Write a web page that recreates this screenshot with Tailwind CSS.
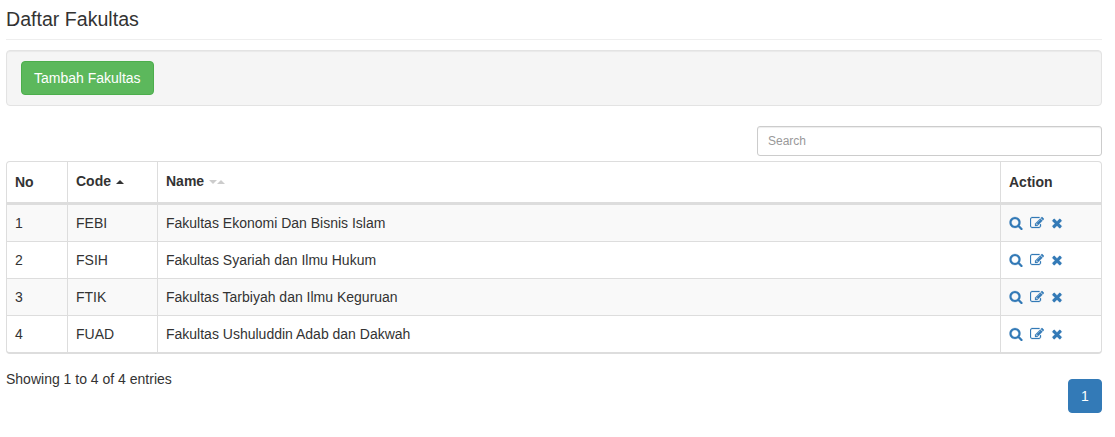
<!DOCTYPE html>
<html lang="en">
<head>
  <meta charset="UTF-8" />
  <title>Daftar Fakultas</title>
  <script src="https://cdn.jsdelivr.net/npm/@tailwindcss/browser@4"></script>
</head>
<body class="bg-white text-[#333] font-['Liberation_Sans',Arial,sans-serif] text-[14px] leading-[20px]">
  <div class="pl-[6px] pr-[13px] w-[1115px] h-[437px] overflow-hidden">

    <!-- Header -->
    <div class="h-[40px] pt-[8px] border-b border-[#eee]">
      <h1 class="text-[19.6px] leading-[22px] font-normal">Daftar Fakultas</h1>
    </div>

    <!-- Toolbar -->
    <div class="mt-[10px] h-[56px] px-[14px] py-[10px] bg-[#f5f5f5] border border-[#e3e3e3] rounded-[4px] shadow-[inset_0_1px_1px_rgba(0,0,0,0.05)]">
      <button class="h-[34px] px-[12px] bg-[#5cb85c] border border-[#4cae4c] rounded-[4px] text-white text-[14px]">Tambah Fakultas</button>
    </div>

    <!-- Search -->
    <div class="mt-[20px] flex justify-end">
      <input type="text" placeholder="Search" class="w-[345px] h-[30px] px-[10px] border border-[#ccc] rounded-[3px] text-[12px] placeholder:text-[#999] shadow-[inset_0_1px_1px_rgba(0,0,0,0.075)]" />
    </div>

    <!-- Table -->
    <div class="mt-[5px] border border-b-2 border-[#ddd] rounded-[4px] overflow-hidden">
      <table class="w-full border-separate border-spacing-0 table-fixed">
        <thead>
          <tr class="font-bold text-left">
            <th class="h-[43px] w-[61px] px-[8px] border-r border-b-[3px] border-[#ddd]">No</th>
            <th class="h-[43px] w-[90px] px-[8px] pb-[2px] border-r border-b-[3px] border-[#ddd]">
              <span class="inline-flex items-center gap-[5px]">Code
                <svg width="8" height="4" viewBox="0 0 8 4" class="mt-[1px]"><path d="M0 4 4 0l4 4z" fill="#333"/></svg>
              </span>
            </th>
            <th class="h-[43px] px-[8px] pb-[2px] border-r border-b-[3px] border-[#ddd]">
              <span class="inline-flex items-center gap-[5px]">Name
                <svg width="16" height="4" viewBox="0 0 16 4" class="mt-[1px]"><path d="M0 0h8L4 4zM8 4l4-4 4 4z" fill="#ccc"/></svg>
              </span>
            </th>
            <th class="h-[43px] w-[100px] px-[8px] border-b-[3px] border-[#ddd]">Action</th>
          </tr>
        </thead>
        <tbody>
          <tr class="bg-[#f9f9f9]">
            <td class="h-[37px] px-[8px] border-r border-b border-[#ddd]">1</td>
            <td class="h-[37px] px-[8px] border-r border-b border-[#ddd]">FEBI</td>
            <td class="h-[37px] px-[8px] border-r border-b border-[#ddd]">Fakultas Ekonomi Dan Bisnis Islam</td>
            <td class="h-[37px] px-[8px] border-b border-[#ddd]">
              <div class="flex items-center text-[#337ab7]">
                <svg viewBox="0 0 1792 1792" class="w-[14px] h-[14px] fill-current stroke-current stroke-[30]"><path d="M1216 832q0-185-131.5-316.5t-316.5-131.5-316.5 131.5-131.5 316.5 131.5 316.5 316.5 131.5 316.5-131.5 131.5-316.5zm512 832q0 52-38 90t-90 38q-54 0-90-38l-343-342q-179 124-399 124-143 0-273.5-55.5t-225-150-150-225-55.5-273.5 55.5-273.5 150-225 225-150 273.5-55.5 273.5 55.5 225 150 150 225 55.5 273.5q0 220-124 399l343 343q37 37 37 90z"/></svg>
                <svg viewBox="0 0 1792 1792" class="ml-[7px] w-[14px] h-[14px] fill-current stroke-current stroke-[30]"><path d="M888 1184l116-116-152-152-116 116v56h96v96h56zm440-720q-16-16-33 1l-350 350q-17 17-1 33t33-1l350-350q17-17 1-33zm80 594v190q0 119-84.5 203.5t-203.5 84.5h-832q-119 0-203.5-84.5t-84.5-203.5v-832q0-119 84.5-203.5t203.5-84.5h832q63 0 117 25 15 7 18 23 3 17-9 29l-49 49q-14 14-32 8-23-6-45-6h-832q-66 0-113 47t-47 113v832q0 66 47 113t113 47h832q66 0 113-47t47-113v-126q0-13 9-22l64-64q15-15 35-7t20 29zm-96-738l288 288-672 672h-288v-288zm444 132l-92 92-288-288 92-92q28-28 68-28t68 28l152 152q28 28 28 68t-28 68z"/></svg>
                <svg viewBox="0 0 1792 1792" class="ml-[6px] w-[14px] h-[14px] fill-current stroke-current stroke-[30]"><path d="M1490 1322q0 40-28 68l-136 136q-28 28-68 28t-68-28l-294-294-294 294q-28 28-68 28t-68-28l-136-136q-28-28-28-68t28-68l294-294-294-294q-28-28-28-68t28-68l136-136q28-28 68-28t68 28l294 294 294-294q28-28 68-28t68 28l136 136q28 28 28 68t-28 68l-294 294 294 294q28 28 28 68z"/></svg>
              </div>
            </td>
          </tr>
          <tr>
            <td class="h-[37px] px-[8px] border-r border-b border-[#ddd]">2</td>
            <td class="h-[37px] px-[8px] border-r border-b border-[#ddd]">FSIH</td>
            <td class="h-[37px] px-[8px] border-r border-b border-[#ddd]">Fakultas Syariah dan Ilmu Hukum</td>
            <td class="h-[37px] px-[8px] border-b border-[#ddd]">
              <div class="flex items-center text-[#337ab7]">
                <svg viewBox="0 0 1792 1792" class="w-[14px] h-[14px] fill-current stroke-current stroke-[30]"><path d="M1216 832q0-185-131.5-316.5t-316.5-131.5-316.5 131.5-131.5 316.5 131.5 316.5 316.5 131.5 316.5-131.5 131.5-316.5zm512 832q0 52-38 90t-90 38q-54 0-90-38l-343-342q-179 124-399 124-143 0-273.5-55.5t-225-150-150-225-55.5-273.5 55.5-273.5 150-225 225-150 273.5-55.5 273.5 55.5 225 150 150 225 55.5 273.5q0 220-124 399l343 343q37 37 37 90z"/></svg>
                <svg viewBox="0 0 1792 1792" class="ml-[7px] w-[14px] h-[14px] fill-current stroke-current stroke-[30]"><path d="M888 1184l116-116-152-152-116 116v56h96v96h56zm440-720q-16-16-33 1l-350 350q-17 17-1 33t33-1l350-350q17-17 1-33zm80 594v190q0 119-84.5 203.5t-203.5 84.5h-832q-119 0-203.5-84.5t-84.5-203.5v-832q0-119 84.5-203.5t203.5-84.5h832q63 0 117 25 15 7 18 23 3 17-9 29l-49 49q-14 14-32 8-23-6-45-6h-832q-66 0-113 47t-47 113v832q0 66 47 113t113 47h832q66 0 113-47t47-113v-126q0-13 9-22l64-64q15-15 35-7t20 29zm-96-738l288 288-672 672h-288v-288zm444 132l-92 92-288-288 92-92q28-28 68-28t68 28l152 152q28 28 28 68t-28 68z"/></svg>
                <svg viewBox="0 0 1792 1792" class="ml-[6px] w-[14px] h-[14px] fill-current stroke-current stroke-[30]"><path d="M1490 1322q0 40-28 68l-136 136q-28 28-68 28t-68-28l-294-294-294 294q-28 28-68 28t-68-28l-136-136q-28-28-28-68t28-68l294-294-294-294q-28-28-28-68t28-68l136-136q28-28 68-28t68 28l294 294 294-294q28-28 68-28t68 28l136 136q28 28 28 68t-28 68l-294 294 294 294q28 28 28 68z"/></svg>
              </div>
            </td>
          </tr>
          <tr class="bg-[#f9f9f9]">
            <td class="h-[37px] px-[8px] border-r border-b border-[#ddd]">3</td>
            <td class="h-[37px] px-[8px] border-r border-b border-[#ddd]">FTIK</td>
            <td class="h-[37px] px-[8px] border-r border-b border-[#ddd]">Fakultas Tarbiyah dan Ilmu Keguruan</td>
            <td class="h-[37px] px-[8px] border-b border-[#ddd]">
              <div class="flex items-center text-[#337ab7]">
                <svg viewBox="0 0 1792 1792" class="w-[14px] h-[14px] fill-current stroke-current stroke-[30]"><path d="M1216 832q0-185-131.5-316.5t-316.5-131.5-316.5 131.5-131.5 316.5 131.5 316.5 316.5 131.5 316.5-131.5 131.5-316.5zm512 832q0 52-38 90t-90 38q-54 0-90-38l-343-342q-179 124-399 124-143 0-273.5-55.5t-225-150-150-225-55.5-273.5 55.5-273.5 150-225 225-150 273.5-55.5 273.5 55.5 225 150 150 225 55.5 273.5q0 220-124 399l343 343q37 37 37 90z"/></svg>
                <svg viewBox="0 0 1792 1792" class="ml-[7px] w-[14px] h-[14px] fill-current stroke-current stroke-[30]"><path d="M888 1184l116-116-152-152-116 116v56h96v96h56zm440-720q-16-16-33 1l-350 350q-17 17-1 33t33-1l350-350q17-17 1-33zm80 594v190q0 119-84.5 203.5t-203.5 84.5h-832q-119 0-203.5-84.5t-84.5-203.5v-832q0-119 84.5-203.5t203.5-84.5h832q63 0 117 25 15 7 18 23 3 17-9 29l-49 49q-14 14-32 8-23-6-45-6h-832q-66 0-113 47t-47 113v832q0 66 47 113t113 47h832q66 0 113-47t47-113v-126q0-13 9-22l64-64q15-15 35-7t20 29zm-96-738l288 288-672 672h-288v-288zm444 132l-92 92-288-288 92-92q28-28 68-28t68 28l152 152q28 28 28 68t-28 68z"/></svg>
                <svg viewBox="0 0 1792 1792" class="ml-[6px] w-[14px] h-[14px] fill-current stroke-current stroke-[30]"><path d="M1490 1322q0 40-28 68l-136 136q-28 28-68 28t-68-28l-294-294-294 294q-28 28-68 28t-68-28l-136-136q-28-28-28-68t28-68l294-294-294-294q-28-28-28-68t28-68l136-136q28-28 68-28t68 28l294 294 294-294q28-28 68-28t68 28l136 136q28 28 28 68t-28 68l-294 294 294 294q28 28 28 68z"/></svg>
              </div>
            </td>
          </tr>
          <tr>
            <td class="h-[36px] px-[8px] border-r border-[#ddd]">4</td>
            <td class="h-[36px] px-[8px] border-r border-[#ddd]">FUAD</td>
            <td class="h-[36px] px-[8px] border-r border-[#ddd]">Fakultas Ushuluddin Adab dan Dakwah</td>
            <td class="h-[36px] px-[8px]">
              <div class="flex items-center text-[#337ab7]">
                <svg viewBox="0 0 1792 1792" class="w-[14px] h-[14px] fill-current stroke-current stroke-[30]"><path d="M1216 832q0-185-131.5-316.5t-316.5-131.5-316.5 131.5-131.5 316.5 131.5 316.5 316.5 131.5 316.5-131.5 131.5-316.5zm512 832q0 52-38 90t-90 38q-54 0-90-38l-343-342q-179 124-399 124-143 0-273.5-55.5t-225-150-150-225-55.5-273.5 55.5-273.5 150-225 225-150 273.5-55.5 273.5 55.5 225 150 150 225 55.5 273.5q0 220-124 399l343 343q37 37 37 90z"/></svg>
                <svg viewBox="0 0 1792 1792" class="ml-[7px] w-[14px] h-[14px] fill-current stroke-current stroke-[30]"><path d="M888 1184l116-116-152-152-116 116v56h96v96h56zm440-720q-16-16-33 1l-350 350q-17 17-1 33t33-1l350-350q17-17 1-33zm80 594v190q0 119-84.5 203.5t-203.5 84.5h-832q-119 0-203.5-84.5t-84.5-203.5v-832q0-119 84.5-203.5t203.5-84.5h832q63 0 117 25 15 7 18 23 3 17-9 29l-49 49q-14 14-32 8-23-6-45-6h-832q-66 0-113 47t-47 113v832q0 66 47 113t113 47h832q66 0 113-47t47-113v-126q0-13 9-22l64-64q15-15 35-7t20 29zm-96-738l288 288-672 672h-288v-288zm444 132l-92 92-288-288 92-92q28-28 68-28t68 28l152 152q28 28 28 68t-28 68z"/></svg>
                <svg viewBox="0 0 1792 1792" class="ml-[6px] w-[14px] h-[14px] fill-current stroke-current stroke-[30]"><path d="M1490 1322q0 40-28 68l-136 136q-28 28-68 28t-68-28l-294-294-294 294q-28 28-68 28t-68-28l-136-136q-28-28-28-68t28-68l294-294-294-294q-28-28-28-68t28-68l136-136q28-28 68-28t68 28l294 294 294-294q28-28 68-28t68 28l136 136q28 28 28 68t-28 68l-294 294 294 294q28 28 28 68z"/></svg>
              </div>
            </td>
          </tr>
        </tbody>
      </table>
    </div>

    <!-- Footer -->
    <div class="mt-[15px] flex justify-between items-start">
      <div>Showing 1 to 4 of 4 entries</div>
      <a class="mt-[10px] w-[34px] h-[34px] flex items-center justify-center bg-[#337ab7] border border-[#337ab7] rounded-[4px] text-white">1</a>
    </div>
  </div>
</body>
</html>
